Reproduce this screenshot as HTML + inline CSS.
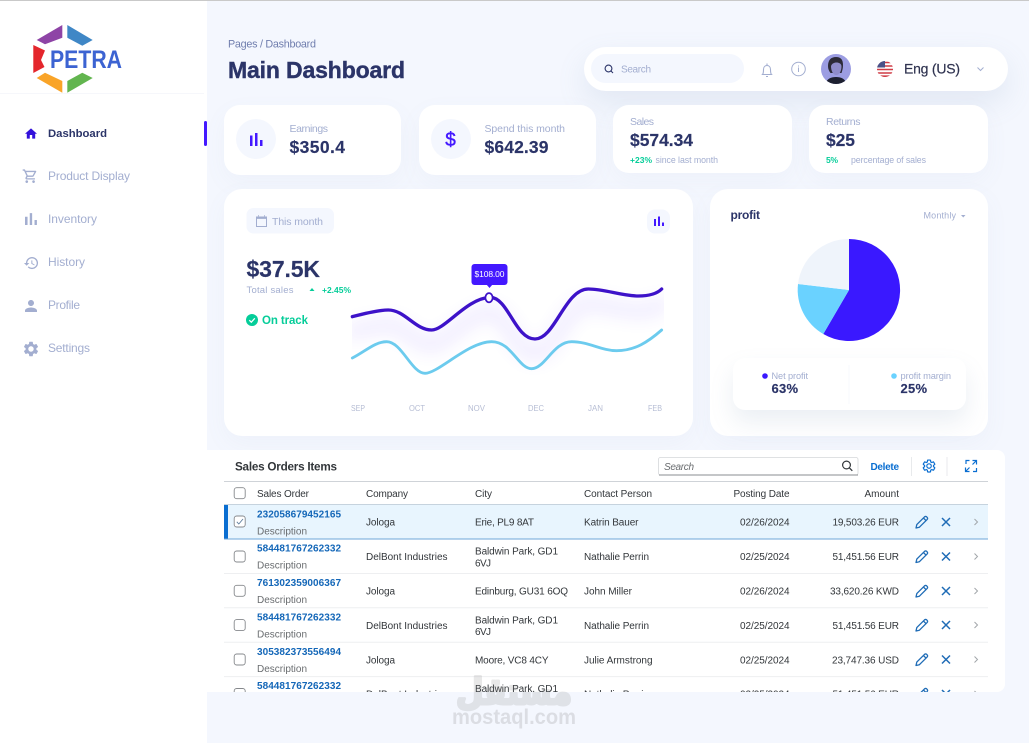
<!DOCTYPE html>
<html lang="en">
<head>
<meta charset="utf-8">
<title>Main Dashboard</title>
<style>
html,body{margin:0;padding:0;width:1029px;height:743px;overflow:hidden;background:#f4f7fe}
body{position:relative;font-family:"Liberation Sans",sans-serif}
.b{position:absolute;background:#fff}
.card{border-radius:16px;box-shadow:0 8px 24px rgba(112,144,176,.05)}
svg{position:absolute;left:0;top:0}
text{font-family:"Liberation Sans",sans-serif}
.nav{font-size:12px;fill:#a3aed0}
.lab{font-size:10.500px;fill:#a3aed0}
.val{font-weight:700;fill:#2b3468;stroke:#2b3468;stroke-width:.15}
.th{font-size:10px;fill:#32363a}
.td{font-size:10px;fill:#32363a}
.lnk{font-size:10px;font-weight:700;fill:#1467b8}
.desc{font-size:10px;fill:#6a6d70}
.mon{font-size:8px;fill:#b6bdd4}
</style>
</head>
<body>
<div class="b" style="left:0;top:0;width:207px;height:743px"></div>
<div class="b" style="left:0;top:0;width:1029px;height:1px;background:#c9c9c9"></div>
<div class="b" style="left:0;top:93px;width:204px;height:1px;background:#f6f7fb"></div>
<div class="b" style="left:584px;top:47px;width:424px;height:44px;border-radius:22px;box-shadow:0 12px 30px rgba(112,144,176,.14)"></div>
<div class="b" style="left:591px;top:54px;width:153px;height:29px;border-radius:15px;background:#f4f7fe"></div>
<div class="b card" style="left:224px;top:105px;width:177px;height:70px"></div>
<div class="b card" style="left:419px;top:105px;width:177px;height:70px"></div>
<div class="b card" style="left:613px;top:105px;width:179px;height:68px"></div>
<div class="b card" style="left:809px;top:105px;width:179px;height:68px"></div>
<div class="b card" style="left:224px;top:189px;width:469px;height:247px;border-radius:18px"></div>
<div class="b card" style="left:710px;top:189px;width:278px;height:247px;border-radius:18px"></div>
<div class="b" style="left:733px;top:358px;width:233px;height:52px;border-radius:12px;box-shadow:0 12px 24px rgba(112,144,176,.14)"></div>
<div class="b" style="left:207px;top:450px;width:798px;height:242px;border-radius:0 8px 8px 0"></div>

<svg width="1029" height="743" viewBox="0 0 1029 743" xmlns="http://www.w3.org/2000/svg">
<defs>
<filter id="bl" x="-15%" y="-100%" width="130%" height="300%"><feGaussianBlur stdDeviation="26"/></filter>
<clipPath id="cc"><rect x="352" y="280" width="312" height="110"/></clipPath>
<clipPath id="tc"><rect x="207" y="450" width="798" height="242"/></clipPath>
<clipPath id="av"><circle cx="836" cy="69" r="15"/></clipPath>
<clipPath id="fl"><circle cx="885" cy="69" r="8"/></clipPath>
<g id="acts" fill="none">
<path d="M-6 6L-5.200 2.600L2.600-5.200Q3.600-6 4.600-5.200L5.200-4.600Q6-3.600 5.200-2.600L-2.600 5.200ZM1.400-4L4-1.400" transform="translate(922 0)" stroke="#1f6cb6" stroke-width="1.300" stroke-linejoin="round"/>
<path d="M942-4L950 4M950-4L942 4" stroke="#1f6cb6" stroke-width="1.500"/>
<path d="M974.500-3L977.500 0L974.500 3" stroke="#a2a6aa" stroke-width="1"/>
</g>
<rect id="cb" x="0" y="0" width="11" height="11" rx="2.500" fill="#fff" stroke="#85888c" stroke-width=".9"/>
</defs>

<!-- logo -->
<polygon points="36.700,40 62.300,25 62.300,37.700 45,44.300" fill="#8e44a6"/>
<polygon points="67.300,25 92.700,40 82.300,45.700 67.300,37.700" fill="#3f87c6"/>
<polygon points="33.300,45 45,50.500 41,60 44.500,67 33.300,73" fill="#e4262c"/>
<polygon points="36.700,78 45,72.700 62.300,81 62.300,92.700" fill="#f9a428"/>
<polygon points="67.300,81 82.300,72.700 92.700,78 67.300,92.700" fill="#62b54f"/>
<text x="50" y="68" font-size="25" font-weight="700" fill="#3c63d2" textLength="72" lengthAdjust="spacingAndGlyphs">PETRA</text>

<!-- nav -->
<rect x="204" y="121" width="3" height="25" rx="1.500" fill="#4318ff"/>
<path transform="translate(23.800 126.600) scale(.6)" fill="#3311db" d="M10 20v-6h4v6h5v-8h3L12 3 2 12h3v8z"/>
<path transform="translate(22 168) scale(.68)" fill="#a3aed0" d="M15.550 13c.75 0 1.410-.41 1.750-1.030l3.580-6.490A.996.996 0 0 0 20.010 4H5.210l-.94-2H1v2h2l3.600 7.590-1.350 2.440C4.520 15.370 5.480 17 7 17h12v-2H7l1.100-2h7.450zM6.160 6h12.150l-2.760 5H8.530L6.160 6zM7 18c-1.100 0-1.990.9-1.990 2s.89 2 1.990 2 2-.9 2-2-.9-2-2-2zm10 0c-1.100 0-1.990.9-1.990 2s.89 2 1.990 2 2-.9 2-2-.9-2-2-2z"/>
<path transform="translate(20.750 208.900) scale(.85)" fill="#a3aed0" d="M5 9.200h3V19H5zM10.600 5h2.800v14h-2.800zm5.600 8H19v6h-2.800z"/>
<path transform="translate(23.300 255) scale(.67)" fill="#a3aed0" d="M13 3a9 9 0 0 0-9 9H1l3.890 3.890.07.14L9 12H6c0-3.870 3.130-7 7-7s7 3.130 7 7-3.130 7-7 7c-1.930 0-3.680-.79-4.940-2.060l-1.420 1.420A8.954 8.954 0 0 0 13 21a9 9 0 0 0 0-18zm-1 5v5l4.280 2.540.72-1.210-3.500-2.080V8H12z"/>
<path transform="translate(22 297) scale(.75)" fill="#a3aed0" d="M12 12c2.210 0 4-1.790 4-4s-1.790-4-4-4-4 1.790-4 4 1.790 4 4 4zm0 2c-2.670 0-8 1.340-8 4v2h16v-2c0-2.660-5.330-4-8-4z"/>
<path transform="translate(22 340) scale(.75)" fill="#a3aed0" d="M19.140 12.940c.04-.3.06-.61.06-.94 0-.32-.02-.64-.07-.94l2.030-1.580a.49.49 0 0 0 .12-.61l-1.920-3.320a.488.488 0 0 0-.59-.22l-2.390.96c-.5-.38-1.030-.7-1.620-.94l-.36-2.540a.484.484 0 0 0-.48-.41h-3.840c-.24 0-.43.17-.47.41l-.36 2.540c-.59.24-1.130.57-1.620.94l-2.390-.96c-.22-.08-.47 0-.59.22L2.740 8.870c-.12.21-.08.47.12.61l2.030 1.580c-.05.3-.09.63-.09.94s.02.64.07.94l-2.030 1.580a.49.49 0 0 0-.12.61l1.920 3.320c.12.22.37.29.59.22l2.390-.96c.5.38 1.030.7 1.620.94l.36 2.540c.05.24.24.41.48.41h3.840c.24 0 .44-.17.47-.41l.36-2.540c.59-.24 1.130-.56 1.620-.94l2.390.96c.22.08.47 0 .59-.22l1.920-3.320c.12-.22.07-.47-.12-.61l-2.010-1.580zM12 15.600c-1.980 0-3.600-1.620-3.600-3.600s1.620-3.600 3.600-3.600 3.600 1.620 3.600 3.600-1.620 3.600-3.600 3.600z"/>
<text x="48" y="137" font-size="11.300" font-weight="700" fill="#2b3468" textLength="59">Dashboard</text>
<text class="nav" x="48" y="180" textLength="82">Product Display</text>
<text class="nav" x="48" y="223" textLength="49">Inventory</text>
<text class="nav" x="48" y="266" textLength="37">History</text>
<text class="nav" x="48" y="309" textLength="32">Profile</text>
<text class="nav" x="48" y="352" textLength="42">Settings</text>

<!-- header -->
<text x="228" y="47.500" font-size="10.800" fill="#707eae" textLength="88">Pages / Dashboard</text>
<text x="228" y="78" font-size="23" font-weight="700" fill="#2b3468" stroke="#2b3468" stroke-width=".4" textLength="177">Main Dashboard</text>
<circle cx="608.500" cy="68.500" r="3.400" fill="none" stroke="#2b3468" stroke-width="1.100"/>
<path d="M611 71L613 73" stroke="#2b3468" stroke-width="1.100"/>
<text x="621" y="72.500" font-size="10" fill="#a3aed0" textLength="30">Search</text>
<path d="M762.500 74.500c1-1 1-2.500 1-5 0-2.500 1.500-4 3.500-4s3.500 1.500 3.500 4c0 2.500 0 4 1 5zM766 76.500h2M767 63.500v2" fill="none" stroke="#a3aed0" stroke-width="1.100"/>
<circle cx="798.500" cy="69" r="6.800" fill="none" stroke="#a3aed0" stroke-width="1"/>
<path d="M798.500 67.500v4.500M798.500 65.500v1" stroke="#a3aed0" stroke-width="1"/>
<g clip-path="url(#av)">
<rect x="821" y="54" width="30" height="30" fill="#9c9de2"/>
<path d="M828 66c0-6 3-9 8-9s7 3 7 8c0 3-.5 5-1.500 8h-11c-1.500-2-2.500-4-2.500-7z" fill="#2c2a38"/>
<path d="M831 66c1-2.500 3-3.500 5.500-3.500s4.500 1 5 3.500c0 5-2 9-5.200 9s-5.300-4-5.300-9z" fill="#8f8ccb"/>
<path d="M826 84c0-5 5-7 10-7s10 2 10 7z" fill="#1d2030"/>
</g>
<g clip-path="url(#fl)">
<rect x="877" y="61" width="16" height="16" fill="#fff"/>
<path d="M877 62.500h16M877 66h16M877 69.500h16M877 73h16M877 76.200h16" stroke="#cf3b45" stroke-width="1.600"/>
<rect x="877" y="61" width="8" height="6.500" fill="#4a5288"/>
</g>
<text x="904" y="73.500" font-size="14" font-weight="400" fill="#2f3350" textLength="56" stroke="#2f3350" stroke-width=".2">Eng (US)</text>
<path d="M977.500 67.500L980.500 70.500L983.500 67.500" fill="none" stroke="#a3aed0" stroke-width="1"/>

<!-- stats -->
<circle cx="256" cy="139" r="20" fill="#f4f7fe"/>
<path d="M250 135.500h2.500V146H250zM255 133h2.500v13H255zM260 140h2.500v6H260z" fill="#4318ff"/>
<text class="lab" x="289.500" y="132" textLength="38.500">Earnings</text>
<text class="val" x="289.500" y="153" font-size="17.500" textLength="55.500">$350.4</text>
<circle cx="451" cy="139" r="20" fill="#f4f7fe"/>
<text x="450.500" y="146" font-size="19" font-weight="400" fill="#4318ff" stroke="#4318ff" stroke-width=".4" text-anchor="middle">$</text>
<text class="lab" x="484.500" y="132" textLength="80.500">Spend this month</text>
<text class="val" x="484.500" y="153" font-size="17.500" textLength="64">$642.39</text>

<text class="lab" x="630" y="125" textLength="24">Sales</text>
<text class="val" x="630" y="146" font-size="17.500" textLength="63">$574.34</text>
<text x="630" y="163" font-size="8.500" font-weight="700" fill="#05cd99" textLength="22">+23%</text>
<text x="655.500" y="163" font-size="8.800" fill="#a3aed0" textLength="62.500">since last month</text>
<text class="lab" x="826" y="125" textLength="34.500">Returns</text>
<text class="val" x="826" y="146" font-size="17.500" textLength="29">$25</text>
<text x="826" y="163" font-size="8.500" font-weight="700" fill="#05cd99" textLength="12">5%</text>
<text x="851" y="163" font-size="8.800" fill="#a3aed0" textLength="75">percentage of sales</text>

<!-- line chart card -->
<rect x="246.500" y="208" width="87.500" height="25.500" rx="7" fill="#f4f7fe"/>
<rect x="256.500" y="217" width="10" height="9.500" fill="none" stroke="#a3aed0" stroke-width="1"/>
<path d="M256.500 217h10v1.500h-10zM258.500 215v2M264.500 215v2" fill="#a3aed0" stroke="#a3aed0" stroke-width=".7"/>
<text class="lab" x="272" y="225" textLength="51">This month</text>
<rect x="647" y="209.500" width="23" height="24" rx="8" fill="#f4f7fe"/>
<path d="M654 219h2v7h-2zM658 216.500h2v9.500h-2zM662 222.500h2v3.500h-2z" fill="#4318ff"/>
<text class="val" x="246.500" y="277" font-size="23" textLength="73.500">$37.5K</text>
<text x="246.500" y="293" font-size="9.500" fill="#a3aed0" textLength="47">Total sales</text>
<path d="M309.500 291L312 288L314.500 291Z" fill="#05cd99"/>
<text x="322" y="293" font-size="8.500" font-weight="700" fill="#05cd99" textLength="29">+2.45%</text>
<circle cx="252" cy="320" r="6" fill="#05cd99"/>
<path d="M249.300 320.200L251.300 322.200L254.800 318.300" fill="none" stroke="#fff" stroke-width="1.200"/>
<text x="262" y="324" font-size="11.500" font-weight="700" fill="#05cd99" textLength="46">On track</text>

<g clip-path="url(#cc)">
<g transform="translate(225 190) scale(.33333)" fill="none" stroke-linecap="round">
<path d="M382 425 C420 415 460 405 490 405 C540 405 570 465 620 465 C660 465 725 370 795 367 C850 367 870 492 930 492 C990 492 1020 342 1090 342 C1140 342 1190 363 1240 363 C1270 363 1295 357 1310 342" stroke="#6a45ff" stroke-width="44" opacity=".1" filter="url(#bl)"/>
</g>
</g>
<g transform="translate(225 190) scale(.33333)" fill="none" stroke-linecap="round">
<path d="M382 504 C420 485 450 455 485 455 C530 455 560 550 600 550 C640 550 730 455 800 455 C860 455 880 536 920 536 C960 536 985 455 1040 455 C1090 455 1130 482 1175 482 C1230 482 1270 455 1310 420" stroke="#6ccbee" stroke-width="8.500"/>
<path d="M382 380 C420 370 460 360 490 360 C540 360 570 420 620 420 C660 420 725 325 795 322 C850 322 870 447 930 447 C990 447 1020 297 1090 297 C1140 297 1190 318 1240 318 C1270 318 1295 312 1310 297" stroke="#3d12c9" stroke-width="10"/>
</g>
<rect x="471.500" y="264" width="36" height="21" rx="3" fill="#4318ff"/>
<path d="M486.500 284.500L489.500 288L492.500 284.500Z" fill="#4318ff"/>
<text x="489.500" y="277" font-size="8.500" fill="#fff" text-anchor="middle" textLength="30">$108.00</text>
<ellipse cx="489" cy="297.700" rx="3.600" ry="4.600" fill="#fff" stroke="#3d12c9" stroke-width="1.700"/>
<text class="mon" x="351" y="411" textLength="14" lengthAdjust="spacingAndGlyphs">SEP</text>
<text class="mon" x="409" y="411" textLength="16" lengthAdjust="spacingAndGlyphs">OCT</text>
<text class="mon" x="468" y="411" textLength="17" lengthAdjust="spacingAndGlyphs">NOV</text>
<text class="mon" x="528" y="411" textLength="16" lengthAdjust="spacingAndGlyphs">DEC</text>
<text class="mon" x="588" y="411" textLength="15" lengthAdjust="spacingAndGlyphs">JAN</text>
<text class="mon" x="648" y="411" textLength="14" lengthAdjust="spacingAndGlyphs">FEB</text>

<!-- pie -->
<text x="730.500" y="219" font-size="12" font-weight="700" fill="#2b3468" textLength="29.500">profit</text>
<text x="923.500" y="218.500" font-size="9" fill="#a3aed0" textLength="32.500">Monthly</text>
<path d="M961 215L965.500 215L963.250 217.500Z" fill="#a3aed0"/>
<path d="M849 290L849 239A51 51 0 1 1 823.300 334Z" fill="#3a18ff"/>
<path d="M849 290L823.300 334A51 51 0 0 1 798 284Z" fill="#6ad2ff"/>
<path d="M849 290L798 284A51 51 0 0 1 849 239Z" fill="#eff4fb"/>
<path d="M849 365V404" stroke="#f7f8fc" stroke-width="1"/>
<circle cx="765" cy="376" r="2.800" fill="#3a18ff"/>
<text x="771.500" y="379" font-size="9.200" fill="#a3aed0" textLength="36.500">Net profit</text>
<text class="val" x="771.500" y="393" font-size="13" textLength="26.500">63%</text>
<circle cx="894" cy="376" r="2.800" fill="#6ad2ff"/>
<text x="900.500" y="379" font-size="9.300" fill="#a3aed0" textLength="50.500">profit margin</text>
<text class="val" x="900.500" y="393" font-size="13" textLength="26.500">25%</text>

<!-- table -->
<text x="235" y="470.500" font-size="11.700" font-weight="700" fill="#32363a" textLength="102">Sales Orders Items</text>
<rect x="658.500" y="457.500" width="199.500" height="17.500" rx="2" fill="#fff" stroke="#d5d7da" stroke-width=".8"/>
<path d="M659 475H858" stroke="#8a8d90" stroke-width=".9"/>
<text x="664" y="470" font-size="10" font-style="italic" fill="#6a6d70" textLength="30">Search</text>
<circle cx="846.500" cy="465" r="3.900" fill="none" stroke="#32363a" stroke-width="1.200"/>
<path d="M849.300 467.800L852.300 470.800" stroke="#32363a" stroke-width="1.300"/>
<text x="870.500" y="470" font-size="10" font-weight="700" fill="#0a6ed1" textLength="28.500">Delete</text>
<path d="M911.500 457V476M947 457V476" stroke="#e8eaec" stroke-width="1"/>
<path transform="translate(921.600 458.600) scale(.62)" fill="none" stroke="#0a6ed1" stroke-width="1.900" d="M19.140 12.940c.04-.3.06-.61.06-.94 0-.32-.02-.64-.07-.94l2.030-1.580a.49.49 0 0 0 .12-.61l-1.920-3.320a.488.488 0 0 0-.59-.22l-2.390.96c-.5-.38-1.030-.7-1.620-.94l-.36-2.540a.484.484 0 0 0-.48-.41h-3.840c-.24 0-.43.17-.47.41l-.36 2.540c-.59.24-1.130.57-1.620.94l-2.390-.96c-.22-.08-.47 0-.59.22L2.740 8.870c-.12.21-.08.47.12.61l2.030 1.580c-.05.3-.09.63-.09.94s.02.64.07.94l-2.030 1.580a.49.49 0 0 0-.12.61l1.920 3.320c.12.22.37.29.59.22l2.390-.96c.5.38 1.030.7 1.620.94l.36 2.540c.05.24.24.41.48.41h3.840c.24 0 .44-.17.47-.41l.36-2.540c.59-.24 1.130-.56 1.620-.94l2.390.96c.22.08.47 0 .59-.22l1.920-3.320c.12-.22.07-.47-.12-.61l-2.010-1.580zM12 15.600c-1.980 0-3.600-1.620-3.600-3.600s1.620-3.600 3.600-3.600 3.600 1.620 3.600 3.600-1.620 3.600-3.600 3.600z"/>
<path d="M966 464V460.500H969.500M972.500 460.500H976.500V464.500M976.500 460.500L972.500 464.500M976.500 468V471.500H973M969.500 471.500H965.500V467.500M965.500 471.500L969.500 467.500" fill="none" stroke="#0a6ed1" stroke-width="1.200"/>

<path d="M224 481.500H988" stroke="#cfd3d8" stroke-width="1"/>
<use href="#cb" x="234.200" y="487.700"/>
<text class="th" x="257" y="497" textLength="52">Sales Order</text>
<text class="th" x="366" y="497" textLength="42">Company</text>
<text class="th" x="475" y="497" textLength="17">City</text>
<text class="th" x="584" y="497" textLength="68">Contact Person</text>
<text class="th" x="789.500" y="497" text-anchor="end" textLength="56">Posting Date</text>
<text class="th" x="899" y="497" text-anchor="end" textLength="34.500">Amount</text>

<g clip-path="url(#tc)">
<rect x="224" y="504.500" width="764" height="34.500" fill="#e8f5fe"/>
<rect x="224" y="504.500" width="4" height="34.500" fill="#0a6ed1"/>
<path d="M224 504.500H988" stroke="#c6d3de" stroke-width="1"/>
<path d="M224 539H988" stroke="#6ea6d8" stroke-width="1"/>
<path d="M224 573.500H988M224 607.800H988M224 642.200H988M224 676.600H988" stroke="#eeeff1" stroke-width="1"/>

<!-- row 1 -->
<use href="#cb" x="234.200" y="516"/>
<path d="M236.800 521.800L238.800 524L243 519" fill="none" stroke="#5c7c9c" stroke-width=".9"/>
<text class="lnk" x="257" y="517.500" textLength="84">232058679452165</text>
<text class="desc" x="257" y="534.500" textLength="50">Description</text>
<text class="td" x="366" y="525.500" textLength="29">Jologa</text>
<text class="td" x="475" y="525.500" textLength="59">Erie, PL9 8AT</text>
<text class="td" x="584" y="525.500" textLength="54.500">Katrin Bauer</text>
<text class="td" x="789.500" y="525.500" text-anchor="end" textLength="49.500">02/26/2024</text>
<text class="td" x="899" y="525.500" text-anchor="end" textLength="66.500">19,503.26 EUR</text>
<use href="#acts" y="522"/>

<!-- row 2 -->
<use href="#cb" x="234.200" y="551"/>
<text class="lnk" x="257" y="551.500" textLength="84">584481767262332</text>
<text class="desc" x="257" y="568.500" textLength="50">Description</text>
<text class="td" x="366" y="560" textLength="81.500">DelBont Industries</text>
<text class="td" x="475" y="554.500" textLength="83">Baldwin Park, GD1</text>
<text class="td" x="475" y="566.300" textLength="16">6VJ</text>
<text class="td" x="584" y="560" textLength="65">Nathalie Perrin</text>
<text class="td" x="789.500" y="560" text-anchor="end" textLength="49.500">02/25/2024</text>
<text class="td" x="899" y="560" text-anchor="end" textLength="66.500">51,451.56 EUR</text>
<use href="#acts" y="556.500"/>

<!-- row 3 -->
<use href="#cb" x="234.200" y="585.300"/>
<text class="lnk" x="257" y="585.800" textLength="84">761302359006367</text>
<text class="desc" x="257" y="603" textLength="50">Description</text>
<text class="td" x="366" y="594.500" textLength="29">Jologa</text>
<text class="td" x="475" y="594.500" textLength="93">Edinburg, GU31 6OQ</text>
<text class="td" x="584" y="594.500" textLength="48">John Miller</text>
<text class="td" x="789.500" y="594.500" text-anchor="end" textLength="49.500">02/26/2024</text>
<text class="td" x="899" y="594.500" text-anchor="end" textLength="69">33,620.26 KWD</text>
<use href="#acts" y="591"/>

<!-- row 4 -->
<use href="#cb" x="234.200" y="619.600"/>
<text class="lnk" x="257" y="620.500" textLength="84">584481767262332</text>
<text class="desc" x="257" y="637.500" textLength="50">Description</text>
<text class="td" x="366" y="629" textLength="81.500">DelBont Industries</text>
<text class="td" x="475" y="623.300" textLength="83">Baldwin Park, GD1</text>
<text class="td" x="475" y="634.800" textLength="16">6VJ</text>
<text class="td" x="584" y="629" textLength="65">Nathalie Perrin</text>
<text class="td" x="789.500" y="629" text-anchor="end" textLength="49.500">02/25/2024</text>
<text class="td" x="899" y="629" text-anchor="end" textLength="66.500">51,451.56 EUR</text>
<use href="#acts" y="625"/>

<!-- row 5 -->
<use href="#cb" x="234.200" y="654"/>
<text class="lnk" x="257" y="654.800" textLength="84">305382373556494</text>
<text class="desc" x="257" y="672" textLength="50">Description</text>
<text class="td" x="366" y="663.500" textLength="29">Jologa</text>
<text class="td" x="475" y="663.500" textLength="73.500">Moore, VC8 4CY</text>
<text class="td" x="584" y="663.500" textLength="68.500">Julie Armstrong</text>
<text class="td" x="789.500" y="663.500" text-anchor="end" textLength="49.500">02/25/2024</text>
<text class="td" x="899" y="663.500" text-anchor="end" textLength="67">23,747.36 USD</text>
<use href="#acts" y="659.500"/>

<!-- row 6 -->
<use href="#cb" x="234.200" y="688.500"/>
<text class="lnk" x="257" y="689" textLength="84">584481767262332</text>
<text class="td" x="366" y="697.500" textLength="81.500">DelBont Industries</text>
<text class="td" x="475" y="692" textLength="83">Baldwin Park, GD1</text>
<text class="td" x="584" y="697.500" textLength="65">Nathalie Perrin</text>
<text class="td" x="789.500" y="697.500" text-anchor="end" textLength="49.500">02/25/2024</text>
<text class="td" x="899" y="697.500" text-anchor="end" textLength="66.500">51,451.56 EUR</text>
<use href="#acts" y="694"/>
</g>

<!-- watermark -->
<g opacity=".16">
<text x="514" y="704" font-size="36" font-weight="700" fill="#777" stroke="#777" stroke-width="3" stroke-linejoin="round" text-anchor="middle" textLength="116" lengthAdjust="spacingAndGlyphs" style="font-family:'DejaVu Sans',sans-serif" direction="rtl">مستقل</text>
</g>
<text x="452" y="724" font-size="21" font-weight="700" fill="#777" fill-opacity=".2" textLength="124" lengthAdjust="spacingAndGlyphs">mostaql.com</text>
</svg>
</body>
</html>
